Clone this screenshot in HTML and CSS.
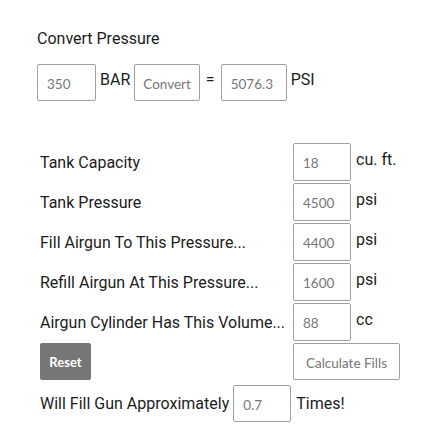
FILE: index.html
```html
<!DOCTYPE html>
<html lang="en">
<head>
    <meta charset="UTF-8">
    <meta name="viewport" content="width=device-width, initial-scale=1.0">
    <title>Airgun Fill Calculator</title>
    <link rel="stylesheet" href="styles.css">
</head>
<body>
    <div id="page">
        <h2 class="title">Convert Pressure</h2>
        <div class="convert">
            <input type="text" class="field field-bar" value="350">
            <span class="word">BAR</span>
            <button class="plain-button">Convert</button>
            <span class="word equals">=</span>
            <input type="text" class="field field-psi" value="5076.3">
            <span class="word">PSI</span>
        </div>

        <div class="calc">
            <label class="calc-label">Tank Capacity</label>
            <input type="text" class="field" value="18">
            <span class="unit">cu. ft.</span>

            <label class="calc-label">Tank Pressure</label>
            <input type="text" class="field" value="4500">
            <span class="unit">psi</span>

            <label class="calc-label">Fill Airgun To This Pressure...</label>
            <input type="text" class="field" value="4400">
            <span class="unit">psi</span>

            <label class="calc-label">Refill Airgun At This Pressure...</label>
            <input type="text" class="field" value="1600">
            <span class="unit">psi</span>

            <label class="calc-label">Airgun Cylinder Has This Volume...</label>
            <input type="text" class="field" value="88">
            <span class="unit">cc</span>

            <div><button class="reset-button">Reset</button></div>
            <button class="plain-button calc-button">Calculate Fills</button>
        </div>

        <div class="result">
            <span>Will Fill Gun Approximately</span>
            <input type="text" class="field" value="0.7">
            <span>Times!</span>
        </div>
    </div>
</body>
</html>
```

FILE: styles.css
```css
body {
    margin: 0;
    background-color: #fff;
    color: #1c1c1c;
    font-family: Roboto, "Liberation Sans", sans-serif;
    font-size: 16px;
}
#page {
    padding: 29px 0 0 37px;
}
.title {
    margin: 0;
    font-size: 16px;
    font-weight: normal;
    line-height: 19px;
}
.convert {
    margin-top: 16px;
    display: flex;
    align-items: flex-start;
    gap: 4px;
}
.word {
    padding-top: 6px;
    line-height: 19px;
}
.equals {
    margin: 0 2px;
}
.field {
    box-sizing: border-box;
    width: 58px;
    height: 38px;
    padding: 2px 9px 0;
    border: 1px solid #a0a0a0;
    border-radius: 2px;
    background-color: #fff;
    color: #777;
    font-family: Lato, "Open Sans", sans-serif;
    font-size: 13.5px;
}
.field-bar {
    width: 59px;
    height: 37px;
}
.field-psi {
    width: 66px;
    height: 37px;
}
.plain-button {
    box-sizing: border-box;
    height: 37px;
    padding: 2px 8px 0;
    border: 1px solid #a0a0a0;
    border-radius: 2px;
    background-color: #fff;
    color: #777;
    font-family: Lato, "Open Sans", sans-serif;
    font-size: 13.5px;
    cursor: pointer;
}
.calc {
    margin: 42px 0 0 3px;
    display: grid;
    grid-template-columns: 253px 58px auto;
    row-gap: 2px;
}
.calc-label {
    align-self: center;
    line-height: 19px;
}
.unit {
    padding: 7px 0 0 5px;
    line-height: 19px;
}
.reset-button {
    box-sizing: border-box;
    width: 51px;
    height: 37px;
    padding-top: 2px;
    border: none;
    border-radius: 2px;
    background-color: #767676;
    color: #fff;
    font-family: Lato, "Open Sans", sans-serif;
    font-size: 13px;
    font-weight: bold;
    cursor: pointer;
}
.calc-button {
    grid-column: 2 / 4;
    width: 107px;
}
.result {
    margin: 5px 0 0 3px;
    display: flex;
    align-items: center;
    gap: 4px;
}
.result .field {
    height: 37px;
}
.result span:last-child {
    margin-left: 1px;
}
```
